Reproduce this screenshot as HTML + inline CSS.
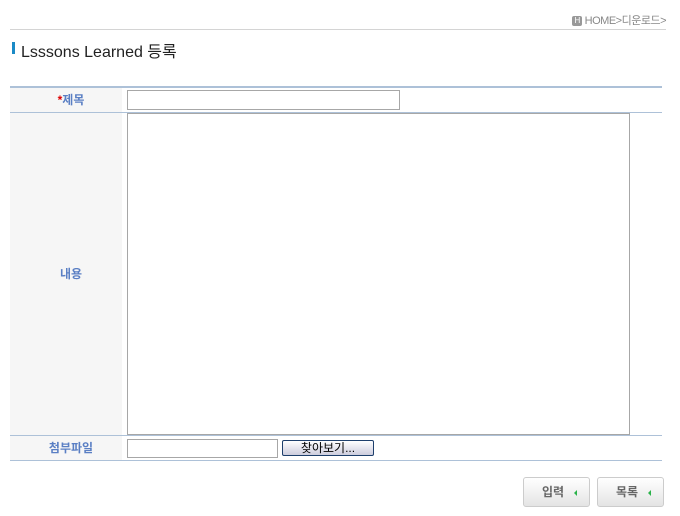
<!DOCTYPE html>
<html><head><meta charset="utf-8"><style>
body{margin:0;background:#fff;font-family:"Liberation Sans","Noto Sans CJK KR",sans-serif;width:680px;height:516px;position:relative;overflow:hidden}
.a{position:absolute}
.lbl{color:#5a7fc4;font-weight:bold;font-size:12px;text-align:center;width:102px;padding-left:10px;left:10px;background:#f6f6f6}
.btn{border:1px solid #ccc;border-radius:3px;background:linear-gradient(#fff,#e4e4e4);font-size:12px;font-weight:bold;color:#666;width:67px;height:30px;line-height:29px;box-sizing:border-box;padding-left:18px}
.btn i{position:absolute;right:12px;top:12px;width:0;height:0;border-right:3px solid #2bb34a;border-top:3px solid transparent;border-bottom:3px solid transparent}
</style></head><body>
<div class="a" style="right:14px;top:12px;font-size:11px;color:#888;letter-spacing:-0.5px"><span style="display:inline-block;width:10px;height:10px;background:#999;color:#fff;font-size:8px;text-align:center;line-height:10px;border-radius:2px;vertical-align:middle">H</span> HOME&gt;디운로드&gt;</div>
<div class="a" style="left:10px;top:29px;width:656px;height:1px;background:#d4d4d4"></div>
<div class="a" style="left:12px;top:42px;width:3px;height:12px;background:#1b8ac6"></div>
<div class="a" style="left:21px;top:38px;font-size:16px;color:#222">Lsssons Learned 등록</div>
<div class="a" style="left:10px;top:86px;width:652px;height:2px;background:#adc1d8"></div>
<div class="a lbl" style="top:88px;height:24px;line-height:24px"><span style="color:#d00">*</span>제목</div>
<div class="a" style="left:127px;top:90px;width:271px;height:18px;border:1px solid #a7a7a7"></div>
<div class="a" style="left:10px;top:112px;width:652px;height:1px;background:#adc1d8"></div>
<div class="a lbl" style="top:113px;height:322px;line-height:322px">내용</div>
<div class="a" style="left:127px;top:113px;width:501px;height:320px;border:1px solid #a7a7a7"></div>
<div class="a" style="left:10px;top:435px;width:652px;height:1px;background:#adc1d8"></div>
<div class="a lbl" style="top:436px;height:24px;line-height:24px">첨부파일</div>
<div class="a" style="left:127px;top:439px;width:149px;height:17px;border:1px solid #a7a7a7"></div>
<div class="a" style="left:282px;top:440px;width:90px;height:14px;border:1px solid #1d3f6c;border-radius:2px;background:linear-gradient(#fff,#ccd);font-size:12px;line-height:14px;text-align:center;color:#000">찾아보기...</div>
<div class="a" style="left:10px;top:460px;width:652px;height:1px;background:#adc1d8"></div>
<div class="a btn" style="left:523px;top:477px">입력<i></i></div>
<div class="a btn" style="left:597px;top:477px">목록<i></i></div>
</body></html>
